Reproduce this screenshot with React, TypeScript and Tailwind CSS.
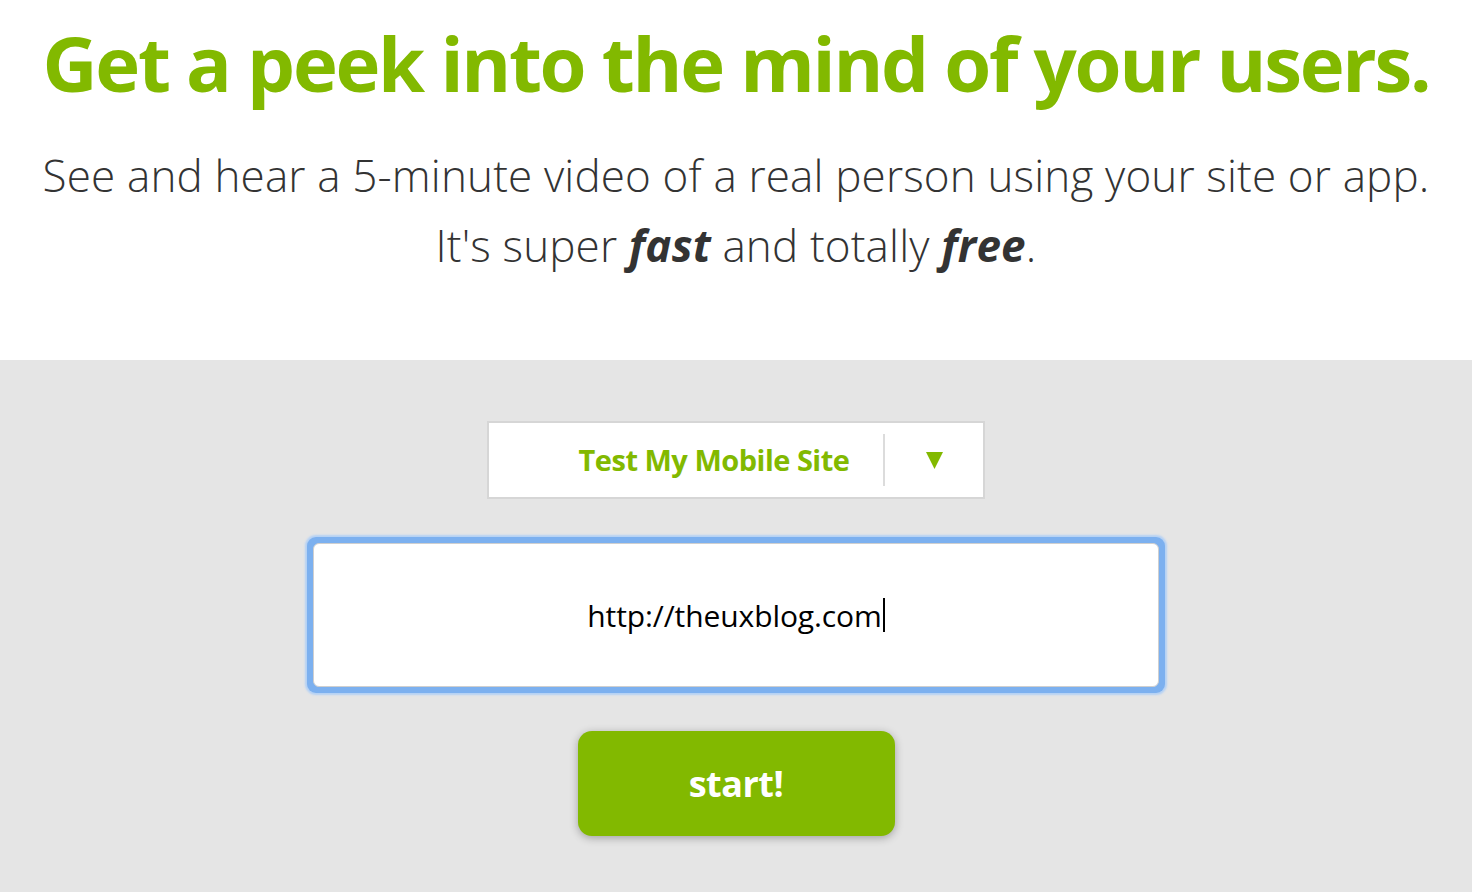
export default function App() {
  return (
    <div className="min-h-screen w-full bg-[#e5e5e5] font-['Open_Sans',sans-serif]">
      <section className="flex h-[360px] flex-col items-center bg-white pt-[17px]">
        <h1 className="whitespace-nowrap text-[76px] font-bold leading-[92px] tracking-[-2.3px] text-[#82b900]">
          Get a peek into the mind of your users.
        </h1>
        <p className="mt-[31px] whitespace-nowrap text-center text-[44px] font-light leading-[70px] tracking-[0.15px] text-[#333333]">
          See and hear a 5-minute video of a real person using your site or app.
          <br />
          It's super <strong className="font-bold italic">fast</strong> and totally{" "}
          <strong className="font-bold italic">free</strong>.
        </p>
      </section>

      <section className="flex flex-col items-center pt-[61px]">
        <div className="flex h-[78px] w-[498px] items-center border-2 border-[#d6d6d6] bg-white">
          <span className="flex-1 pl-[88px] text-center text-[29px] font-bold tracking-[-0.5px] text-[#82b900]">
            Test My Mobile Site
          </span>
          <span className="ml-[32px] h-[52px] w-[2px] bg-[#dcdcdc]" />
          <span className="flex w-[98px] justify-center">
            <svg width="17" height="17" viewBox="0 0 16 16">
              <polygon points="0,0 16,0 8,16" fill="#82b900" />
            </svg>
          </span>
        </div>

        <div className="mt-[38px] rounded-[9px] bg-[#7cb0ef] p-[6px] shadow-[0_0_2px_2px_#b4d1f5]">
          <div className="flex h-[144px] w-[846px] items-center justify-center rounded-[6px] border border-[#cfcfcf] bg-white">
            <span className="text-[30px] tracking-[-0.1px] text-black">http://theuxblog.com</span>
            <span className="ml-[1px] h-[34px] w-[2px] bg-black" />
          </div>
        </div>

        <button className="mt-[38px] flex h-[105px] w-[317px] items-center justify-center rounded-[14px] bg-[#82b900] text-[36px] font-bold tracking-[-0.5px] text-white shadow-[0_2px_8px_rgba(0,0,0,0.3)]">
          start!
        </button>
      </section>
    </div>
  );
}
